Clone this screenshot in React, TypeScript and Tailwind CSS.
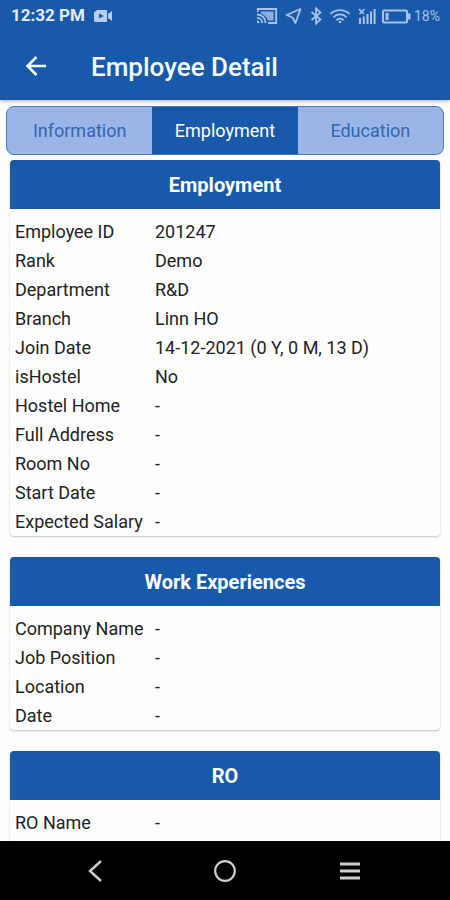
import React, { useState } from "react";

const tabs = ["Information", "Employment", "Education"];

const employment = [
  ["Employee ID", "201247"],
  ["Rank", "Demo"],
  ["Department", "R&D"],
  ["Branch", "Linn HO"],
  ["Join Date", "14-12-2021 (0 Y, 0 M, 13 D)"],
  ["isHostel", "No"],
  ["Hostel Home", "-"],
  ["Full Address", "-"],
  ["Room No", "-"],
  ["Start Date", "-"],
  ["Expected Salary", "-"],
];

const workExperiences = [
  ["Company Name", "-"],
  ["Job Position", "-"],
  ["Location", "-"],
  ["Date", "-"],
];

const ro = [["RO Name", "-"]];

const StatusBar = () => (
  <div className="flex h-8 items-center justify-between pl-[11px] pr-[10px]">
    <div className="flex items-center gap-2">
      <span className="text-[17px] font-bold text-[#e6eefc]">12:32 PM</span>
      <svg className="h-4 w-5" viewBox="0 0 20 16" fill="#b9cdf0">
        <path d="M1 4.500L4 2h10v12H2.500A1.500 1.500 0 0 1 1 12.500z" />
        <path d="M15 6l4-3v10l-4-3z" />
        <path d="M6 5.500l5 2.500-5 2.500z" fill="#185aa9" />
      </svg>
    </div>
    <div className="flex items-center text-[#a9c2ec]">
      <svg
        className="mr-[7px] h-[18px] w-[22px]"
        viewBox="0 0 22 18"
        fill="none"
        stroke="currentColor"
        strokeWidth="1.8"
      >
        <path d="M1.800 5V2h18.400v14H12" />
        <path d="M5 4.500h12.500v9H12C10.500 9.500 8 7.500 5 6.500z" fill="currentColor" stroke="none" opacity="0.8" />
        <path d="M1 7.500c5 0 8.500 3.500 8.500 8.500M1 10.800c3 0 5.200 2.200 5.200 5.200" />
        <path d="M1 13.500a2.500 2.500 0 0 1 2.500 2.500H1z" fill="currentColor" stroke="none" />
      </svg>
      <svg
        className="mr-2 h-[18px] w-[17px]"
        viewBox="0 0 17 18"
        fill="none"
        stroke="currentColor"
        strokeWidth="1.8"
        strokeLinejoin="round"
      >
        <path d="M15.500 2L1.500 8l6 2.500 3 5.500z" />
      </svg>
      <svg
        className="mr-2 h-[18px] w-3"
        viewBox="0 0 12 18"
        fill="none"
        stroke="currentColor"
        strokeWidth="1.8"
      >
        <path d="M1.500 5l9 7.500L6 16.500v-15L10.500 5.500l-9 7.500" />
      </svg>
      <svg
        className="mr-2 h-[18px] w-5"
        viewBox="0 0 20 18"
        fill="none"
        stroke="currentColor"
        strokeWidth="1.800"
        strokeLinecap="round"
      >
        <path d="M1 6.500c5-4.600 13-4.600 18 0M4 9.700c3.500-3 8.500-3 12 0M7 12.700c2-1.500 4-1.500 6 0" />
        <circle cx="10" cy="15" r="1.300" fill="currentColor" stroke="none" />
      </svg>
      <svg
        className="mr-[6px] h-[18px] w-[18px]"
        viewBox="0 0 18 18"
        fill="none"
        stroke="currentColor"
        strokeWidth="2"
      >
        <path d="M2 17v-6M5.800 17V9.500M9.500 17V7M13 17V4.500M16.600 17V2" />
        <path d="M1 2l5 5M6.500 2l-5 5" strokeWidth="1.600" />
      </svg>
      <svg className="mr-[3px] h-[15px] w-[29px]" viewBox="0 0 29 15" fill="none">
        <rect x="1" y="1.500" width="24" height="12" rx="1" stroke="currentColor" strokeWidth="2" />
        <path d="M3.500 4h3v7h-3zM26 4.500h2.500v6H26z" fill="currentColor" />
      </svg>
      <span className="text-sm">18%</span>
    </div>
  </div>
);

const DetailCard = ({ title, rows }: { title: string; rows: string[][] }) => (
  <section className="rounded-[4px] shadow-[0_1px_2px_rgba(0,0,0,0.25)] last:pb-5">
    <h2 className="rounded-t-[4px] bg-[#185aa9] pt-px text-center text-xl leading-[48px] font-bold text-white">
      {title}
    </h2>
    <table className="mt-2 w-full text-left text-lg leading-[29px] text-[#222222]">
      <tbody>
        {rows.map(([label, value]) => (
          <tr key={label}>
            <th scope="row" className="w-[145px] p-0 pl-[5px] font-normal">
              {label}
            </th>
            <td className="p-0">{value}</td>
          </tr>
        ))}
      </tbody>
    </table>
  </section>
);

const App = () => {
  const [activeTab, setActiveTab] = useState("Employment");

  return (
    <div className="flex h-screen flex-col bg-[#fefefe] font-['Roboto',sans-serif]">
      <header className="shrink-0 bg-[#185aa9] shadow-[0_1px_4px_rgba(0,0,0,0.35)]">
        <StatusBar />
        <div className="flex h-[68px] items-center gap-11 pl-[25px]">
          <button type="button" aria-label="Back">
            <svg
              className="h-[22px] w-[22px]"
              viewBox="0 0 22 22"
              fill="none"
              stroke="#f4f8ff"
              strokeWidth="2.600"
            >
              <path d="M21 11H3M11.500 2L2.500 11l9 9" />
            </svg>
          </button>
          <h1 className="pt-[2px] text-[26px] font-medium text-[#f4f8ff]">
            Employee Detail
          </h1>
        </div>
      </header>

      <div className="mx-[6px] mt-[6px] grid h-[49px] shrink-0 grid-cols-3 overflow-hidden rounded-lg border border-[#4a7cc4] bg-[#9bb5e6]">
        {tabs.map((tab) => (
          <button
            key={tab}
            type="button"
            onClick={() => setActiveTab(tab)}
            className={
              tab === activeTab
                ? "bg-[#185aa9] pt-px text-lg text-white"
                : "pt-px text-lg text-[#2f66b3]"
            }
          >
            {tab}
          </button>
        ))}
      </div>

      <main className="mt-[5px] min-h-0 flex-1 overflow-y-auto px-[10px] [scrollbar-width:none]">
        <div className="flex flex-col gap-[21px]">
          <DetailCard title="Employment" rows={employment} />
          <DetailCard title="Work Experiences" rows={workExperiences} />
          <DetailCard title="RO" rows={ro} />
        </div>
      </main>

      <nav className="grid h-[59px] shrink-0 grid-cols-[1fr_68px_1fr] items-center bg-black">
        <button type="button" aria-label="Back" className="flex justify-end pr-[88px]">
          <svg className="h-6 w-4" viewBox="0 0 16 24" fill="none" stroke="#cfcfcf" strokeWidth="2.400">
            <path d="M14 2L3 12l11 10" />
          </svg>
        </button>
        <button type="button" aria-label="Home" className="flex justify-center">
          <svg className="h-6 w-6" viewBox="0 0 24 24" fill="none" stroke="#cfcfcf" strokeWidth="2.200">
            <circle cx="12" cy="12" r="9.800" />
          </svg>
        </button>
        <button type="button" aria-label="Recent apps" className="flex pl-[81px]">
          <svg className="h-5 w-5" viewBox="0 0 20 20" fill="#cfcfcf">
            <path d="M0 1.500h20v3H0zM0 8.500h20v3H0zM0 15.500h20v3H0z" />
          </svg>
        </button>
      </nav>
    </div>
  );
};

export default App;
